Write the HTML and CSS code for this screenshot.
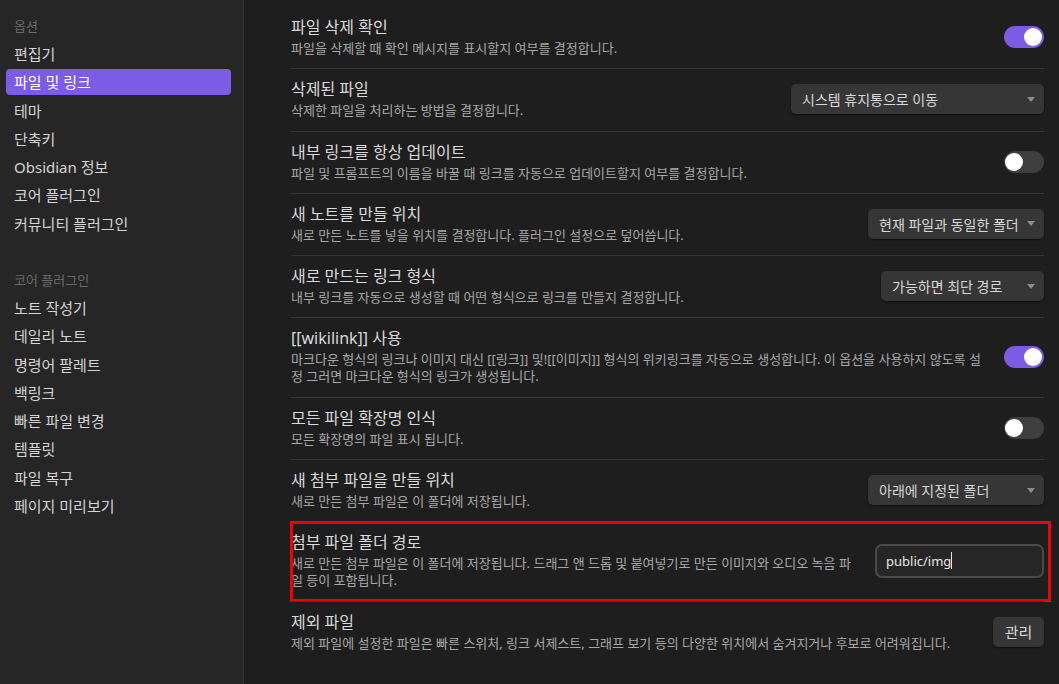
FILE: index.html
```html
<!DOCTYPE html>
<html lang="ko">
<head>
<meta charset="utf-8">
<title>설정 - 파일 및 링크</title>
<link rel="stylesheet" href="styles.css">
</head>
<body>
<aside class="sidebar">
  <div class="nav-group">
    <div class="nav-header">옵션</div>
    <div class="nav-list">
      <div class="nav-item">편집기</div>
      <div class="nav-item is-active">파일 및 링크</div>
      <div class="nav-item">테마</div>
      <div class="nav-item">단축키</div>
      <div class="nav-item">Obsidian 정보</div>
      <div class="nav-item">코어 플러그인</div>
      <div class="nav-item">커뮤니티 플러그인</div>
    </div>
  </div>
  <div class="nav-group">
    <div class="nav-header">코어 플러그인</div>
    <div class="nav-list">
      <div class="nav-item">노트 작성기</div>
      <div class="nav-item">데일리 노트</div>
      <div class="nav-item">명령어 팔레트</div>
      <div class="nav-item">백링크</div>
      <div class="nav-item">빠른 파일 변경</div>
      <div class="nav-item">템플릿</div>
      <div class="nav-item">파일 복구</div>
      <div class="nav-item">페이지 미리보기</div>
    </div>
  </div>
</aside>
<main class="content">
  <div class="setting">
    <div class="info">
      <div class="name">파일 삭제 확인</div>
      <div class="desc">파일을 삭제할 때 확인 메시지를 표시할지 여부를 결정합니다.</div>
    </div>
    <div class="toggle is-on"></div>
  </div>
  <div class="setting">
    <div class="info">
      <div class="name">삭제된 파일</div>
      <div class="desc">삭제한 파일을 처리하는 방법을 결정합니다.</div>
    </div>
    <div class="dropdown dropdown--trash"><span>시스템 휴지통으로 이동</span><span class="caret"></span></div>
  </div>
  <div class="setting">
    <div class="info">
      <div class="name">내부 링크를 항상 업데이트</div>
      <div class="desc">파일 및 프롬프트의 이름을 바꿀 때 링크를 자동으로 업데이트할지 여부를 결정합니다.</div>
    </div>
    <div class="toggle"></div>
  </div>
  <div class="setting">
    <div class="info">
      <div class="name">새 노트를 만들 위치</div>
      <div class="desc">새로 만든 노트를 넣을 위치를 결정합니다. 플러그인 설정으로 덮어씁니다.</div>
    </div>
    <div class="dropdown dropdown--note"><span>현재 파일과 동일한 폴더</span><span class="caret"></span></div>
  </div>
  <div class="setting">
    <div class="info">
      <div class="name">새로 만드는 링크 형식</div>
      <div class="desc">내부 링크를 자동으로 생성할 때 어떤 형식으로 링크를 만들지 결정합니다.</div>
    </div>
    <div class="dropdown dropdown--link"><span>가능하면 최단 경로</span><span class="caret"></span></div>
  </div>
  <div class="setting">
    <div class="info">
      <div class="name">[[wikilink]] 사용</div>
      <div class="desc">마크다운 형식의 링크나 이미지 대신 [[링크]] 및![[이미지]] 형식의 위키링크를 자동으로 생성합니다. 이 옵션을 사용하지 않도록 설정 그러면 마크다운 형식의 링크가 생성됩니다.</div>
    </div>
    <div class="toggle is-on"></div>
  </div>
  <div class="setting">
    <div class="info">
      <div class="name">모든 파일 확장명 인식</div>
      <div class="desc">모든 확장명의 파일 표시 됩니다.</div>
    </div>
    <div class="toggle"></div>
  </div>
  <div class="setting">
    <div class="info">
      <div class="name">새 첨부 파일을 만들 위치</div>
      <div class="desc">새로 만든 첨부 파일은 이 폴더에 저장됩니다.</div>
    </div>
    <div class="dropdown dropdown--attach"><span>아래에 지정된 폴더</span><span class="caret"></span></div>
  </div>
  <div class="setting setting--marked">
    <div class="info">
      <div class="name">첨부 파일 폴더 경로</div>
      <div class="desc">새로 만든 첨부 파일은 이 폴더에 저장됩니다. 드래그 앤 드롭 및 붙여넣기로 만든 이미지와 오디오 녹음 파일 등이 포함됩니다.</div>
    </div>
    <div class="text-input">public/img<span class="text-caret"></span></div>
  </div>
  <div class="setting">
    <div class="info">
      <div class="name">제외 파일</div>
      <div class="desc">제외 파일에 설정한 파일은 빠른 스위처, 링크 서제스트, 그래프 보기 등의 다양한 위치에서 숨겨지거나 후보로 어려워집니다.</div>
    </div>
    <div class="button">관리</div>
  </div>
</main>
</body>
</html>
```

FILE: styles.css
```css
* { box-sizing: border-box; }
html, body { margin: 0; height: 100%; }
body {
  display: flex;
  background: #1e1e1e;
  font-family: "Noto Sans", "Noto Sans CJK KR", sans-serif;
  color: #dadada;
  overflow: hidden;
}

/* Sidebar */
.sidebar {
  width: 244px;
  flex: none;
  background: #262626;
  border-right: 1px solid #363636;
  padding: 16.5px 12px 0 6px;
}
.nav-group + .nav-group { margin-top: 34px; }
.nav-header {
  font-size: 13px;
  line-height: 18px;
  color: #6a6a6a;
  padding: 0 8px 6.5px;
}
.nav-list {
  display: flex;
  flex-direction: column;
  gap: 2.25px;
}
.nav-item {
  font-size: 15px;
  line-height: 20px;
  padding: 3px 8px;
  border-radius: 4px;
  color: #d4d4d4;
}
.nav-item.is-active {
  background: #7c5ce5;
  color: #ffffff;
}

/* Content */
.content {
  flex: 1;
  padding: 7px 15px 0 47px;
}
.setting {
  position: relative;
  display: flex;
  align-items: center;
  padding: 10px 0 11.3px;
  border-top: 1px solid #363636;
}
.setting:first-child { border-top: none; }
.setting--marked::after {
  content: "";
  position: absolute;
  top: -1px;
  bottom: -1px;
  left: -1px;
  right: -7px;
  border: 3px solid #f00000;
  pointer-events: none;
}
.info {
  flex: 1 1 auto;
  margin-right: 20px;
}
.name {
  font-size: 16px;
  line-height: 20px;
  color: #dadada;
}
.desc {
  font-size: 13px;
  line-height: 17px;
  color: #a8a8a8;
  padding-top: 3px;
}

/* Controls */
.toggle {
  position: relative;
  flex: none;
  width: 40px;
  height: 22px;
  border-radius: 11px;
  background: #3f3f3f;
}
.toggle::after {
  content: "";
  position: absolute;
  top: 2px;
  left: 1px;
  width: 18px;
  height: 18px;
  border-radius: 50%;
  background: #ffffff;
}
.toggle.is-on { background: #7c5ce5; }
.toggle.is-on::after { left: 20px; }

.dropdown {
  flex: none;
  height: 30px;
  display: flex;
  align-items: center;
  justify-content: space-between;
  padding: 0 9px 0 11px;
  background: #363636;
  border-radius: 5px;
  font-size: 14px;
  color: #d8d8d8;
  box-shadow: 0 1px 2px rgba(0, 0, 0, 0.55);
}
.dropdown--trash { width: 253px; }
.dropdown--note { width: 176px; }
.dropdown--link { width: 163px; }
.dropdown--attach { width: 176px; }
.caret {
  width: 0;
  height: 0;
  border-left: 4px solid transparent;
  border-right: 4px solid transparent;
  border-top: 5px solid #8c8c8c;
}

.text-input {
  flex: none;
  width: 169px;
  height: 34px;
  display: flex;
  align-items: center;
  padding: 0 9px;
  border: 2px solid #4a4a4a;
  border-radius: 7px;
  background: #262626;
  font-size: 13px;
  color: #e6e6e6;
}
.text-caret {
  display: inline-block;
  width: 1px;
  height: 17px;
  background: #e6e6e6;
}

.button {
  flex: none;
  width: 51px;
  height: 30px;
  display: flex;
  align-items: center;
  justify-content: center;
  background: #363636;
  border-radius: 5px;
  font-size: 15px;
  color: #dadada;
  box-shadow: 0 1px 2px rgba(0, 0, 0, 0.55);
}
```
